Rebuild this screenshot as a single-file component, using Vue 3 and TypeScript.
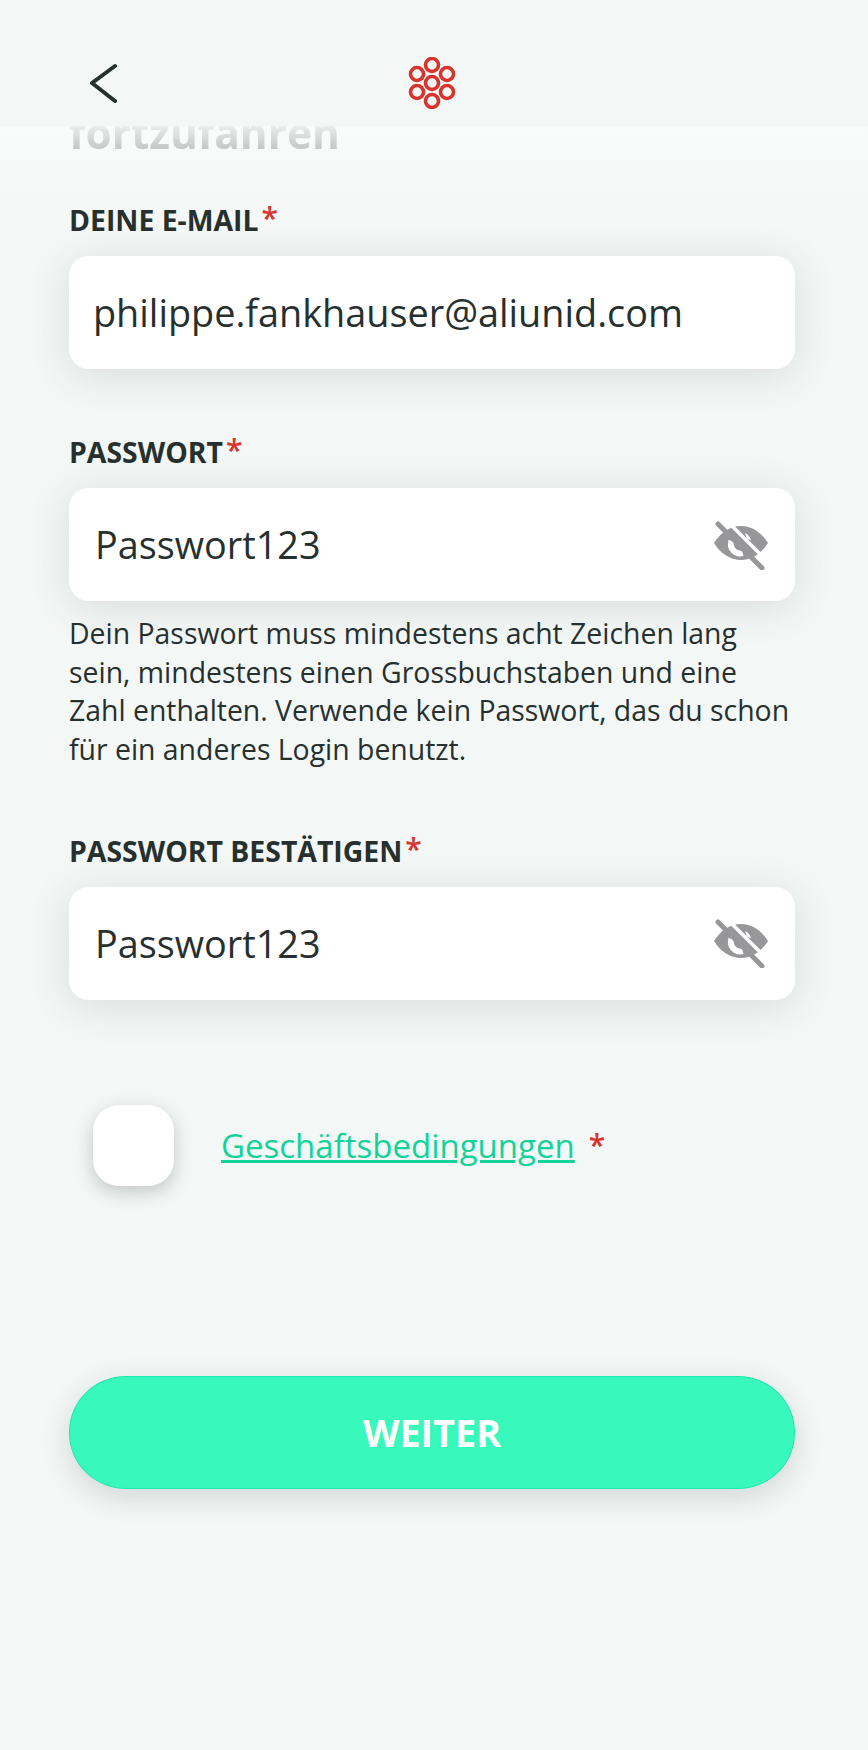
<template>
  <div class="screen">
    <header class="top-bar">
      <button class="back" aria-label="Zurück">
        <svg viewBox="0 0 30 40" width="30" height="40">
          <polyline points="27,3 4,20 27,38" />
        </svg>
      </button>
      <svg class="logo" viewBox="0 0 50 52" width="50" height="52">
        <circle v-for="(c, i) in rings" :key="i" :cx="c[0]" :cy="c[1]" r="6.5" />
      </svg>
    </header>

    <main class="content">
      <div class="heading-clip">
        <h1 class="heading">fortzufahren</h1>
      </div>

      <section v-for="field in fields" :key="field.label" class="field" :class="field.cls">
        <label class="field-label">{{ field.label }}<span class="req">*</span></label>
        <div class="input" :class="{ 'input-plain': !field.secret }">
          <span>{{ field.value }}</span>
          <svg v-if="field.secret" class="eye" viewBox="0 0 58 50" width="58" height="50">
            <path class="eye-shape" d="M29 6C18 6 8 13 2 23c6 10 16 17 27 17s21-7 27-17C50 13 40 6 29 6z" />
            <path class="eye-cut" d="M16.500 20a12.500 12.500 0 0 0 15 16l-1.500-5.500a7 7 0 0 1-8-9z" />
            <path class="eye-cut" d="M33 13a11 11 0 0 1 6 7l-4-1z" />
            <line class="eye-gap" x1="20" y1="6" x2="48" y2="34" />
            <line class="eye-slash" x1="6" y1="4" x2="50" y2="48" />
          </svg>
        </div>
        <p v-if="field.hint" class="hint">{{ field.hint }}</p>
      </section>

      <div class="terms">
        <div class="checkbox"></div>
        <a class="terms-link">Geschäftsbedingungen</a>
        <span class="req terms-req">*</span>
      </div>

      <button class="next">WEITER</button>
    </main>
  </div>
</template>

<script setup lang="ts">
const rings: number[][] = [
  [25, 8],
  [10, 17],
  [40, 17],
  [25, 26],
  [10, 35],
  [40, 35],
  [25, 44],
];

const fields = [
  { label: 'DEINE E-MAIL', value: 'philippe.fankhauser@aliunid.com', secret: false, hint: '', cls: 'field-email' },
  {
    label: 'PASSWORT',
    value: 'Passwort123',
    secret: true,
    hint: 'Dein Passwort muss mindestens acht Zeichen lang sein, mindestens einen Grossbuchstaben und eine Zahl enthalten. Verwende kein Passwort, das du schon für ein anderes Login benutzt.',
    cls: 'field-pass',
  },
  { label: 'PASSWORT BESTÄTIGEN', value: 'Passwort123', secret: true, hint: '', cls: 'field-confirm' },
];
</script>

<style>
html,
body {
  margin: 0;
  background: #f3f7f6;
}
</style>

<style scoped>
.screen {
  width: 868px;
  height: 1750px;
  overflow: hidden;
  background: #f3f7f6;
  font-family: 'Open Sans', sans-serif;
  color: #26302e;
}

.top-bar {
  height: 126px;
  box-sizing: border-box;
  padding-top: 40px;
  display: flex;
  align-items: center;
  background: #f3f7f6;
}

.back {
  margin-left: 88px;
  padding: 0;
  border: 0;
  background: none;
  width: 30px;
  height: 40px;
}

.back polyline {
  fill: none;
  stroke: #26302e;
  stroke-width: 4;
  stroke-linecap: round;
  stroke-linejoin: round;
}

.logo {
  margin-left: 289px;
}

.logo circle {
  fill: none;
  stroke: #d9332e;
  stroke-width: 3.6;
}

.content {
  padding: 0 73px 0 69px;
  background: linear-gradient(#fafcfb 0, #f6f9f8 40px, #f3f7f6 130px);
}

.heading-clip {
  height: 29px;
  overflow: hidden;
  display: flex;
  align-items: flex-end;
  -webkit-mask-image: linear-gradient(rgba(0, 0, 0, 0.12), rgba(0, 0, 0, 0.5));
  mask-image: linear-gradient(rgba(0, 0, 0, 0.12), rgba(0, 0, 0, 0.5));
}

.heading {
  margin: 0 0 -3px;
  font-size: 42.4px;
  line-height: 50px;
  font-weight: 700;
  color: #7c8180;
}

.field {
  display: flex;
  flex-direction: column;
}

.field-email {
  margin-top: 46px;
}

.field-pass {
  margin-top: 64px;
}

.field-confirm {
  margin-top: 63px;
}

.field-label {
  font-size: 28.4px;
  line-height: 38px;
  font-weight: 700;
  margin-bottom: 17px;
}

.req {
  color: #d9332e;
  font-weight: 600;
  font-size: 30px;
  line-height: 20px;
  margin-left: 3px;
  vertical-align: 2px;
}

.input {
  height: 113px;
  box-sizing: border-box;
  background: #fff;
  border-radius: 20px;
  padding: 0 25px 0 26px;
  display: flex;
  align-items: center;
  justify-content: space-between;
  font-size: 37.8px;
  color: #26302e;
  box-shadow: 0 6px 40px rgba(60, 75, 72, 0.14);
}

.input-plain {
  padding-left: 24px;
}

.eye {
  display: block;
  flex: none;
}

.eye-shape {
  fill: #97979a;
}

.eye-cut {
  fill: #fff;
}

.eye-gap {
  stroke: #fff;
  stroke-width: 3.5;
}

.eye-slash {
  stroke: #97979a;
  stroke-width: 5;
  stroke-linecap: round;
}

.hint {
  margin: 13px 0 0;
  font-size: 28.4px;
  line-height: 38.7px;
}

.terms {
  margin-top: 105px;
  margin-left: 24px;
  display: flex;
  align-items: center;
}

.checkbox {
  width: 81px;
  height: 81px;
  border-radius: 26px;
  background: #fff;
  box-shadow: 0 6px 18px rgba(50, 60, 58, 0.25);
  flex: none;
}

.terms-link {
  margin-left: 47px;
  font-size: 33px;
  color: #14d398;
  text-decoration: underline;
}

.terms-req {
  margin-left: 14px;
}

.next {
  display: block;
  width: 726px;
  height: 113px;
  margin-top: 190px;
  border: 1px solid #1fe9b0;
  border-radius: 57px / 56px;
  background: #39f8bc;
  color: #fff;
  font-family: inherit;
  font-size: 37.8px;
  font-weight: 700;
  box-shadow: 0 8px 28px rgba(50, 70, 65, 0.18);
}
</style>
